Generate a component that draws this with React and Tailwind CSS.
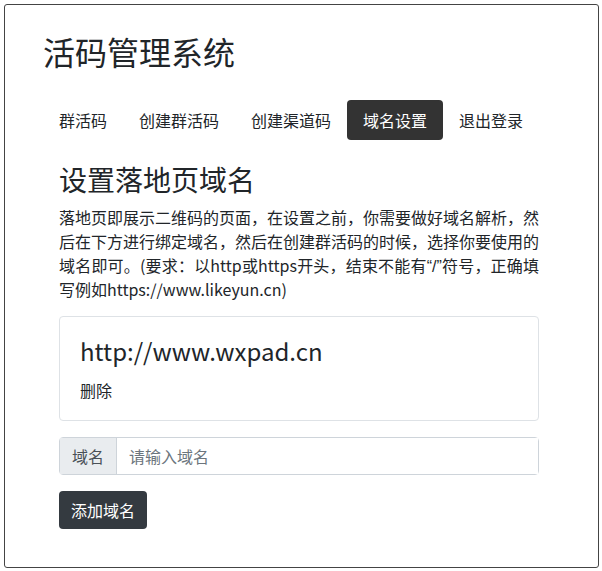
import React, { useState } from 'react';

const tabs = ["群活码", "创建群活码", "创建渠道码", "域名设置", "退出登录"];

export default function App() {
    const [active] = useState("域名设置");
    const [domain, setDomain] = useState('');

    return (
        <div className="min-h-screen bg-white p-1 text-[#212529]" style={{ fontFamily: '"Noto Sans CJK SC", "Open Sans", sans-serif' }}>
            <div className="h-[564px] w-[595px] rounded-[3px] border border-[#444] pl-[38px] pr-[43px] pt-[27px]">
                <h1 className="text-[32px] leading-[1.2] font-normal">活码管理系统</h1>

                <nav className="mt-[30px] flex">
                    {tabs.map(t => (
                        <a key={t} href="#" className={`block h-10 rounded px-4 py-2 text-base leading-6 ${t === active ? 'bg-[#333] text-white' : 'text-[#212529]'}`}>{t}</a>
                    ))}
                </nav>

                <div className="px-4">
                    <h2 className="mt-[23px] text-[28px] leading-[1.2] font-normal">设置落地页域名</h2>
                    <p className="mt-[8px] h-24 text-justify text-base leading-6">
                        落地页即展示二维码的页面，在设置之前，你需要做好域名解析，然后在下方进行绑定域名，然后在创建群活码的时候，选择你要使用的域名即可。(要求：以http或https开头，结束不能有<span className="font-['Liberation_Sans',sans-serif] leading-none">“/”</span>符号，正确填写例如https://www.likeyun.cn)
                    </p>

                    <div className="mt-[15px] h-[105px] rounded border border-[#dee2e6] px-5 pt-[20px]">
                        <div className="text-[24px] leading-[1.2]">http://www.wxpad.cn</div>
                        <a href="#" className="mt-[12px] block text-base leading-6 text-[#212529]">删除</a>
                    </div>

                    <div className="mt-4 flex h-[38px] rounded border border-[#ced4da]">
                        <span className="flex items-center border-r border-[#ced4da] bg-[#e9ecef] px-3 text-base text-[#495057]">域名</span>
                        <input
                            type="text"
                            value={domain}
                            onChange={e => setDomain(e.target.value)}
                            placeholder="请输入域名"
                            className="min-w-0 flex-1 bg-white px-3 text-base text-[#495057] outline-none placeholder:text-[#6c757d]"
                        />
                    </div>

                    <button className="mt-4 h-[38px] rounded bg-[#343a40] px-3 text-base text-white">添加域名</button>
                </div>
            </div>
        </div>
    );
}
